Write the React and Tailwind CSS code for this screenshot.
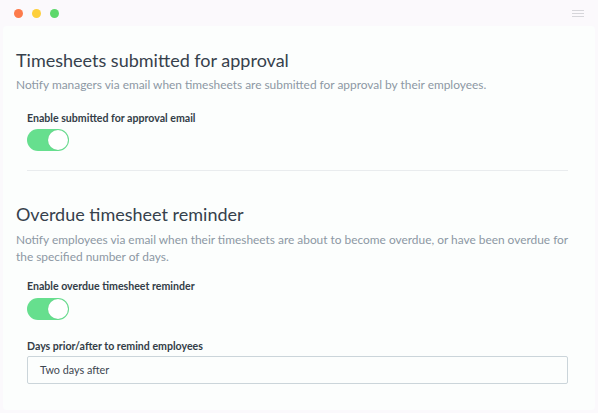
import React from "react";

function Toggle() {
  return (
    <div className="w-[42px] h-[22px] rounded-full bg-[#66df8e] flex items-center justify-end px-[1px]">
      <div className="w-[20px] h-[20px] rounded-full bg-white shadow-[0_0_1px_rgba(0,0,0,0.15)]" />
    </div>
  );
}

export default function App() {
  return (
    <div
      className="w-[598px] h-[413px] bg-[#fbf9fc] flex flex-col overflow-hidden"
      style={{ fontFamily: "Lato, 'Liberation Sans', sans-serif" }}
    >
      {/* Window bar */}
      <div className="h-[26px] flex items-center px-[14px] shrink-0">
        <div className="flex gap-[9px]">
          <span className="w-[9px] h-[9px] rounded-full bg-[#fd7b4b]" />
          <span className="w-[9px] h-[9px] rounded-full bg-[#fdcf3b]" />
          <span className="w-[9px] h-[9px] rounded-full bg-[#5dd86b]" />
        </div>
        <div className="ml-auto flex flex-col gap-[2px]">
          <span className="w-[12px] h-[1px] bg-[#d6d6da]" />
          <span className="w-[12px] h-[1px] bg-[#d6d6da]" />
          <span className="w-[12px] h-[1px] bg-[#d6d6da]" />
        </div>
      </div>

      {/* Card */}
      <div className="mx-[3px] mb-[3px] flex-1 rounded-[4px] bg-[#fcfefd] px-[13px] pt-[21px]">
        <h2 className="text-[18px] leading-[26px] text-[#36414c]">Timesheets submitted for approval</h2>
        <p className="mt-[3px] text-[11.9px] leading-[17px] text-[#8c98a4]">
          Notify managers via email when timesheets are submitted for approval by their employees.
        </p>
        <div className="pl-[11px] pr-[14px]">
          <div className="mt-[18px] text-[10.6px] leading-[14px] font-bold text-[#333d47]">
            Enable submitted for approval email
          </div>
          <div className="mt-[4px]">
            <Toggle />
          </div>
          <div className="mt-[19px] h-px bg-[#e9ecee]" />
        </div>

        <h2 className="mt-[30px] text-[18px] leading-[26px] text-[#36414c]">Overdue timesheet reminder</h2>
        <p className="mt-[4px] pr-[10px] text-[11.9px] leading-[17px] text-[#8c98a4]">
          Notify employees via email when their timesheets are about to become overdue, or have been overdue for
          the specified number of days.
        </p>
        <div className="pl-[11px] pr-[14px]">
          <div className="mt-[14px] text-[10.6px] leading-[14px] font-bold text-[#333d47]">
            Enable overdue timesheet reminder
          </div>
          <div className="mt-[5px]">
            <Toggle />
          </div>
          <div className="mt-[19px] text-[10.6px] leading-[14px] font-bold text-[#333d47]">
            Days prior/after to remind employees
          </div>
          <div className="mt-[3px] h-[28px] border border-[#cbd5da] rounded-[2px] flex items-center px-[12px] text-[10.8px] text-[#3c4650]">
            Two days after
          </div>
        </div>
      </div>
    </div>
  );
}
